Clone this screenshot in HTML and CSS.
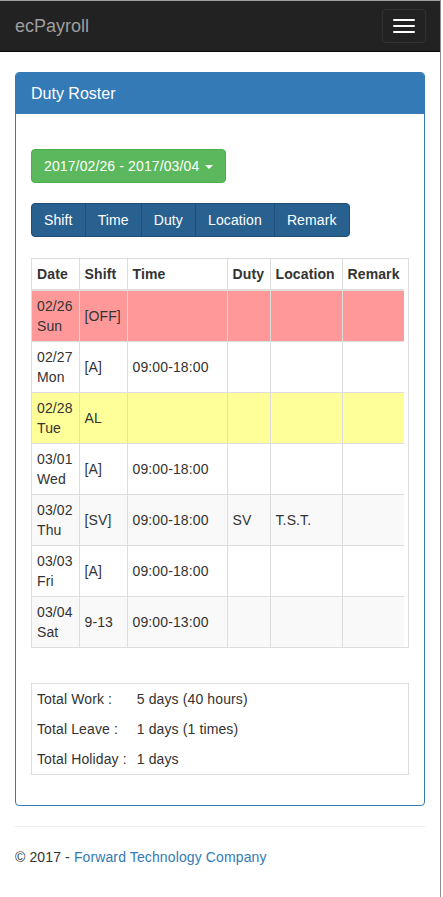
FILE: index.html
```html
<!DOCTYPE html>
<html lang="en">
<head>
<meta charset="utf-8">
<title>ecPayroll - Duty Roster</title>
<link rel="stylesheet" href="styles.css">
</head>
<body>
<div class="frame">
  <nav class="navbar">
    <a class="brand" href="#">ecPayroll</a>
    <button class="toggle" type="button" aria-label="Toggle navigation">
      <span class="bar"></span><span class="bar"></span><span class="bar"></span>
    </button>
  </nav>

  <div class="container">
    <div class="panel">
      <div class="panel-heading">Duty Roster</div>
      <div class="panel-body">
        <button class="btn btn-success" type="button">2017/02/26 - 2017/03/04 <span class="caret"></span></button>

        <div class="btn-group">
          <button class="btn btn-dark" type="button">Shift</button>
          <button class="btn btn-dark" type="button">Time</button>
          <button class="btn btn-dark" type="button">Duty</button>
          <button class="btn btn-dark" type="button">Location</button>
          <button class="btn btn-dark" type="button">Remark</button>
        </div>

        <div class="table-wrap">
          <table class="roster">
            <colgroup>
              <col class="c-date"><col class="c-shift"><col class="c-time"><col class="c-duty"><col class="c-loc"><col class="c-rem">
            </colgroup>
            <thead>
              <tr><th>Date</th><th>Shift</th><th>Time</th><th>Duty</th><th>Location</th><th>Remark</th></tr>
            </thead>
            <tbody>
              <tr class="off"><td>02/26<br>Sun</td><td>[OFF]</td><td></td><td></td><td></td><td></td></tr>
              <tr><td>02/27<br>Mon</td><td>[A]</td><td>09:00-18:00</td><td></td><td></td><td></td></tr>
              <tr class="leave"><td>02/28<br>Tue</td><td>AL</td><td></td><td></td><td></td><td></td></tr>
              <tr><td>03/01<br>Wed</td><td>[A]</td><td>09:00-18:00</td><td></td><td></td><td></td></tr>
              <tr class="stripe"><td>03/02<br>Thu</td><td>[SV]</td><td>09:00-18:00</td><td>SV</td><td>T.S.T.</td><td></td></tr>
              <tr><td>03/03<br>Fri</td><td>[A]</td><td>09:00-18:00</td><td></td><td></td><td></td></tr>
              <tr class="stripe"><td>03/04<br>Sat</td><td>9-13</td><td>09:00-13:00</td><td></td><td></td><td></td></tr>
            </tbody>
          </table>
        </div>

        <table class="summary">
          <tr><td class="label">Total Work :</td><td>5 days (40 hours)</td></tr>
          <tr><td class="label">Total Leave :</td><td>1 days (1 times)</td></tr>
          <tr><td class="label">Total Holiday :</td><td>1 days</td></tr>
        </table>
      </div>
    </div>

    <hr class="rule">
    <footer class="footer">&copy; 2017 - <a href="#">Forward Technology Company</a></footer>
  </div>
</div>
</body>
</html>
```

FILE: styles.css
```css
* { box-sizing: border-box; }

html, body {
  margin: 0;
  padding: 0;
  background: #fff;
}

body {
  font-family: "Liberation Sans", Arial, Helvetica, sans-serif;
  font-size: 14px;
  line-height: 20px;
  letter-spacing: 0.12px;
  color: #333;
}

.frame {
  width: 441px;
  min-height: 897px;
  border-top: 1px solid #a0a0a0;
  border-right: 1px solid #8c8c8c;
}

.navbar {
  height: 51px;
  background: #222;
  border-bottom: 1px solid #080808;
  display: flex;
  justify-content: space-between;
  align-items: flex-start;
  margin-bottom: 20px;
}

.brand {
  padding: 15px 15px;
  font-size: 18px;
  line-height: 20px;
  letter-spacing: 0;
  color: #9d9d9d;
  text-decoration: none;
}

.toggle {
  margin: 8px 14px 0 0;
  padding: 9px 10px;
  background: transparent;
  border: 1px solid #333;
  border-radius: 4px;
  display: flex;
  flex-direction: column;
  gap: 4px;
}

.toggle .bar {
  display: block;
  width: 22px;
  height: 2px;
  border-radius: 1px;
  background: #fff;
}

.container {
  padding: 0 15px;
}

.panel {
  border: 1px solid #337ab7;
  border-radius: 4px;
  background: #fff;
}

.panel-heading {
  background: #337ab7;
  color: #fff;
  padding: 10px 15px;
  font-size: 16px;
  line-height: 21px;
  letter-spacing: 0;
  border-radius: 3px 3px 0 0;
}

.panel-body {
  padding: 15px;
  display: flex;
  flex-direction: column;
  align-items: flex-start;
}

.btn {
  font-family: inherit;
  font-size: 14px;
  line-height: 20px;
  letter-spacing: 0.12px;
  padding: 6px 12px;
  border: 1px solid transparent;
  border-radius: 4px;
  color: #fff;
  cursor: pointer;
}

.btn-success {
  margin-top: 20px;
  background: #5cb85c;
  border-color: #4cae4c;
}

.caret {
  display: inline-block;
  width: 0;
  height: 0;
  margin-left: 2px;
  vertical-align: middle;
  border-top: 4px solid #fff;
  border-left: 4px solid transparent;
  border-right: 4px solid transparent;
}

.btn-group {
  margin-top: 20px;
  display: flex;
}

.btn-dark {
  background: #286090;
  border-color: #204d74;
  border-radius: 0;
  margin-left: -1px;
}

.btn-group .btn-dark:first-child {
  margin-left: 0;
  border-radius: 4px 0 0 4px;
}

.btn-group .btn-dark:last-child {
  border-radius: 0 4px 4px 0;
}

.table-wrap {
  margin-top: 21px;
  width: 378px;
  border: 1px solid #ddd;
  margin-bottom: 35px;
}

.roster {
  width: 372px;
  border-collapse: collapse;
  table-layout: fixed;
}

.c-date { width: 47px; }
.c-shift { width: 48px; }
.c-time { width: 100px; }
.c-duty { width: 43px; }
.c-loc { width: 72px; }
.c-rem { width: 62px; }

.roster th,
.roster td {
  padding: 5px;
  text-align: left;
  border: 1px solid #ddd;
  white-space: nowrap;
}

.roster th {
  font-weight: bold;
  vertical-align: bottom;
  border-top: 0;
  border-bottom-width: 2px;
}

.roster td {
  vertical-align: middle;
}

.roster th:first-child,
.roster td:first-child { border-left: 0; }

.roster th:last-child,
.roster td:last-child { border-right: 0; }

.roster tbody tr:last-child td { border-bottom: 0; }

.roster tr.stripe td { background: #f9f9f9; }
.roster tr.off td { background: #ff9999; }
.roster tr.leave td { background: #ffff99; }

.summary {
  width: 378px;
  border: 1px solid #ddd;
  border-collapse: collapse;
  margin-bottom: 15px;
}

.summary td {
  padding: 5px;
  line-height: 20px;
  white-space: nowrap;
}

.summary td.label {
  width: 100px;
}

.rule {
  margin: 20px 0;
  border: 0;
  border-top: 1px solid #eee;
}

.footer {
  line-height: 20px;
}

.footer a {
  color: #337ab7;
  text-decoration: none;
}
```
